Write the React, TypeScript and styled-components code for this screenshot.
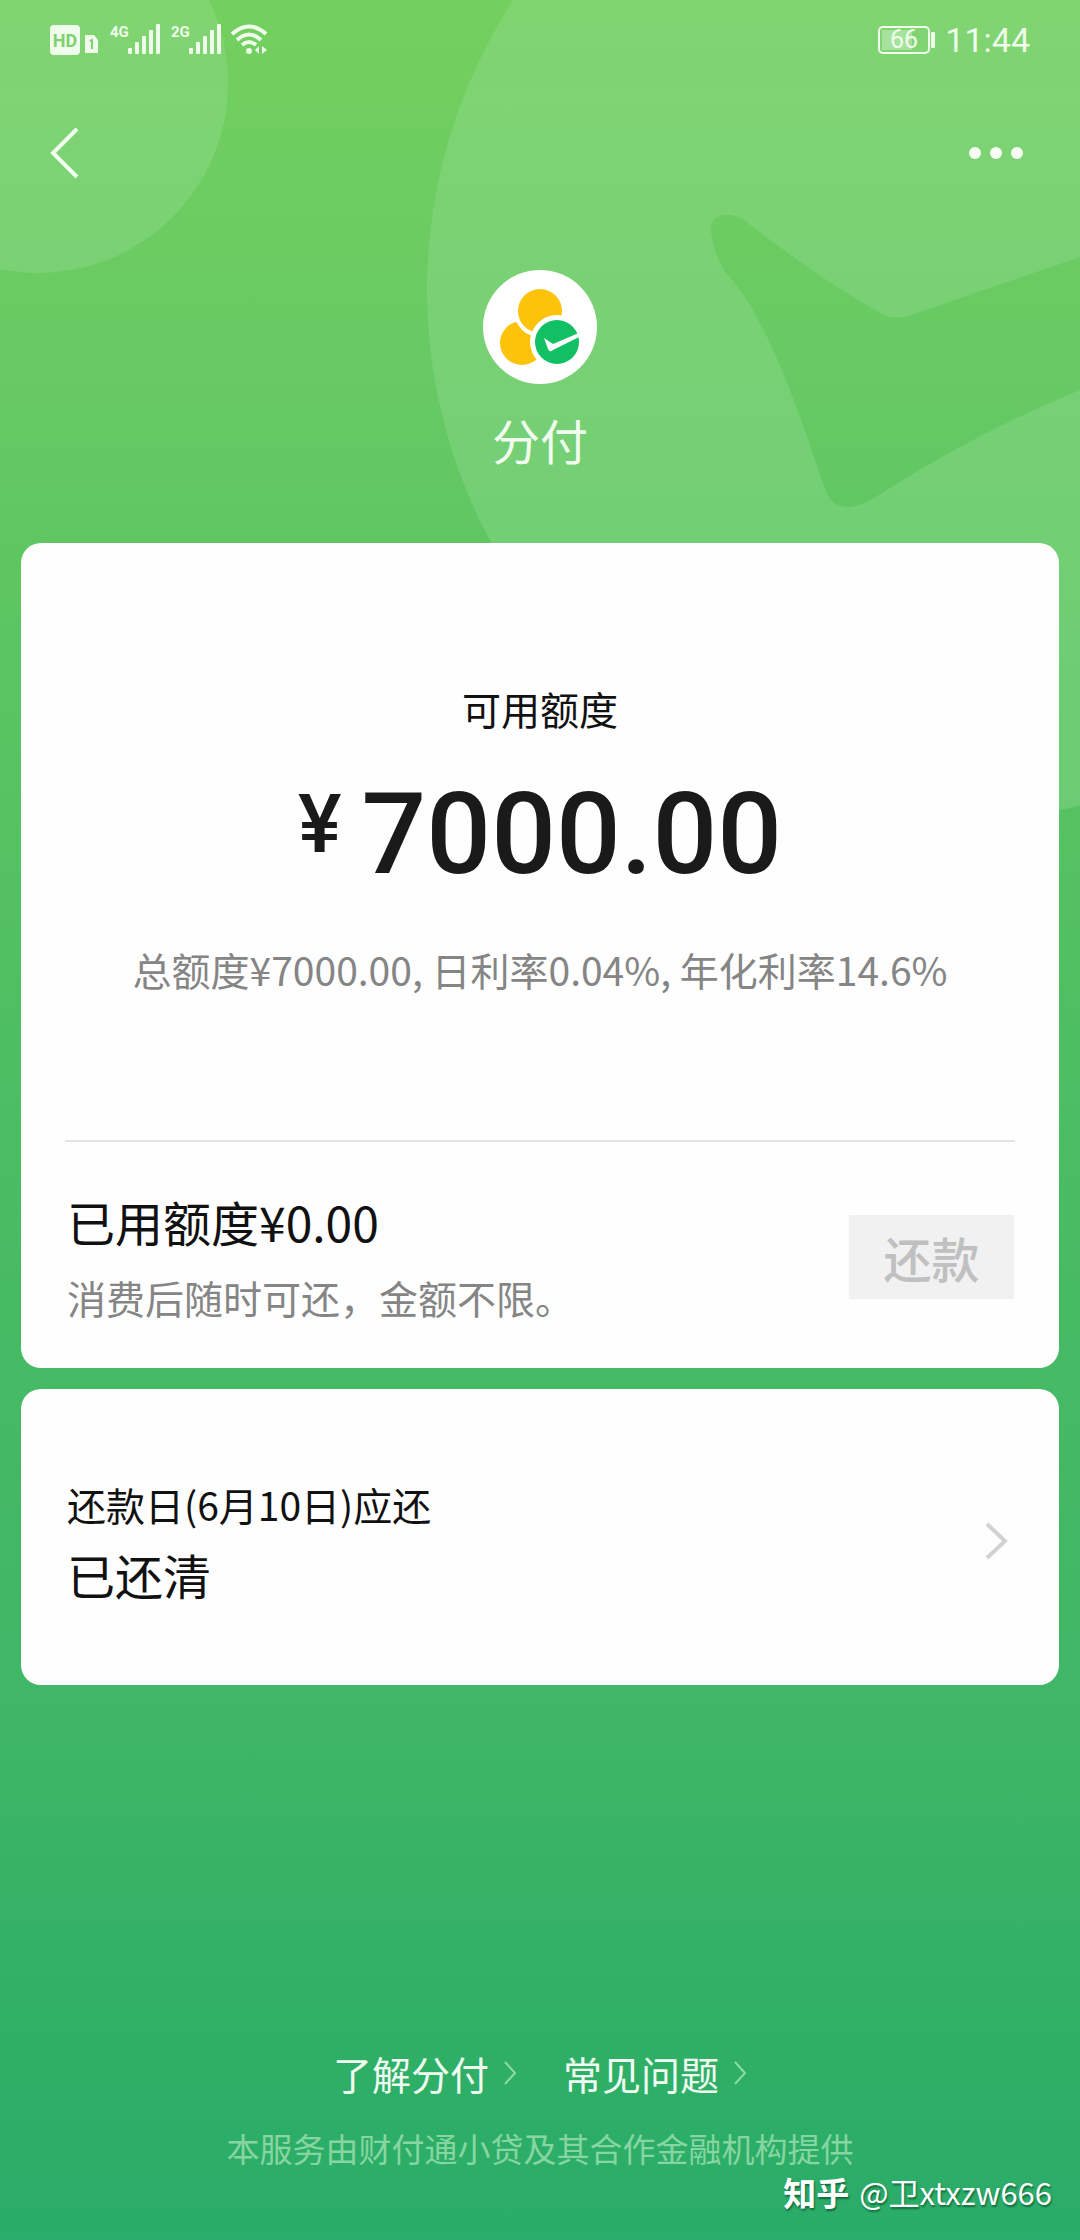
import React from "react";
import styled, { createGlobalStyle } from "styled-components";

const GlobalStyle = createGlobalStyle`
  * { box-sizing: border-box; }
  body { margin: 0; }
  button, a { font: inherit; color: inherit; text-decoration: none; }
`;

const cjk = `"Noto Sans CJK SC", "Noto Sans", sans-serif`;

const Page = styled.div`
  position: relative;
  display: flex;
  flex-direction: column;
  min-height: 100vh;
  overflow: hidden;
  font-family: ${cjk};
  background: linear-gradient(
    #74d05e 0%,
    #66c964 18%,
    #5dc661 26%,
    #48bb63 55%,
    #40b667 76%,
    #30b065 90%,
    #2aac6a 100%
  );
`;

const Backdrop = styled.svg`
  position: absolute;
  top: 0;
  right: 0;
  width: 1080px;
  height: 830px;
`;

const Content = styled.div`
  position: relative;
  display: flex;
  flex-direction: column;
  flex: 1;
`;

const StatusBar = styled.div`
  display: flex;
  justify-content: space-between;
  align-items: center;
  height: 80px;
  padding: 0 50px;
  color: #effceb;
`;

const StatusGroup = styled.div`
  display: flex;
  align-items: center;
  gap: 8px;
`;

const Clock = styled.span`
  font: 400 34px/40px Roboto, sans-serif;
`;

const NavBar = styled.nav`
  display: flex;
  justify-content: space-between;
  align-items: center;
  height: 146px;
  padding: 0 50px;
`;

const IconButton = styled.button`
  display: flex;
  padding: 0;
  border: 0;
  background: none;
  cursor: pointer;
`;

const Hero = styled.header`
  display: flex;
  flex-direction: column;
  align-items: center;
  padding: 44px 0 72px;
`;

const Title = styled.h1`
  margin: 23px 0 0;
  font-size: 48px;
  font-weight: 400;
  line-height: 64px;
  color: #f0fdee;
`;

const Cards = styled.main`
  display: flex;
  flex-direction: column;
  gap: 21px;
  padding: 0 21px;
`;

const Card = styled.section`
  border-radius: 20px;
  background: #fefefe;
`;

const Summary = styled.div`
  display: flex;
  flex-direction: column;
  align-items: center;
  margin: 0 44px;
  padding: 137px 0 143px;
  border-bottom: 2px solid #e1e3e5;
`;

const Body = styled.p<{ $tone?: string }>`
  margin: 0;
  font-size: 39px;
  font-weight: 400;
  line-height: 56px;
  color: ${(p) => p.$tone ?? "#111"};
`;

const Heading = styled.p`
  margin: 0;
  font-size: 48px;
  font-weight: 400;
  line-height: 64px;
  color: #111;
`;

const Amount = styled.div`
  display: flex;
  align-items: flex-start;
  gap: 20px;
  margin: 42px 0 51px;
  font-family: Roboto, sans-serif;
  font-weight: 500;
  color: #1a1a1a;
`;

const Currency = styled.span`
  font-size: 82px;
  line-height: 92px;
`;

const Value = styled.span`
  font-size: 114px;
  line-height: 112px;
`;

const Row = styled.div`
  display: flex;
  justify-content: space-between;
  align-items: center;
  padding: 47px 45px 43px 46px;
`;

const DueRow = styled.a`
  display: flex;
  justify-content: space-between;
  align-items: center;
  padding: 87px 50px 79px 46px;
`;

const Lines = styled.div<{ $gap: number }>`
  display: flex;
  flex-direction: column;
  gap: ${(p) => p.$gap}px;
`;

const RepayButton = styled.button`
  width: 165px;
  height: 84px;
  padding: 0;
  border: 0;
  background: #f1f1f1;
  font-size: 48px;
  font-weight: 500;
  line-height: 64px;
  color: #c0c0c0;
`;

const Footer = styled.footer`
  display: flex;
  flex-direction: column;
  margin-top: auto;
  padding-bottom: 28px;
`;

const Links = styled.div`
  display: flex;
  justify-content: center;
  gap: 46px;
`;

const FooterLink = styled.a`
  display: flex;
  align-items: center;
  gap: 14px;
  font-size: 39px;
  line-height: 56px;
  color: #f0fcf2;
`;

const Provider = styled.p`
  margin: 23px 0 0;
  font-size: 33px;
  font-weight: 400;
  line-height: 48px;
  text-align: center;
  color: #87d5a0;
`;

const Watermark = styled.p`
  display: flex;
  justify-content: flex-end;
  gap: 10px;
  margin: 0;
  padding-right: 28px;
  font-size: 31px;
  line-height: 40px;
  color: #fff;
  text-shadow: 1px 2px 2px rgba(0, 60, 30, 0.6);
`;

const Brand = styled.span`
  font-size: 33px;
  font-weight: 700;
`;

function Decoration() {
  return (
    <Backdrop viewBox="0 0 1080 830" aria-hidden="true">
      <defs>
        <mask id="tick">
          <rect width="1080" height="830" fill="#fff" />
          <path
            d="M711 232C708 212 734 210 748 223C798 262 846 294 882 314Q897 321 914 314Q1000 284 1090 254V386Q980 430 882 493Q836 524 824 486C796 404 766 315 726 273Q714 256 711 232Z"
            fill="#000"
          />
        </mask>
      </defs>
      <g fill="#a0e0a0" fillOpacity="0.3">
        <circle cx="38" cy="83" r="190" />
        <circle cx="957" cy="290" r="530" mask="url(#tick)" />
      </g>
    </Backdrop>
  );
}

function SignalIcons() {
  const bars = [6, 12, 18, 24, 30];
  const text = { fontFamily: "Roboto, sans-serif", fontWeight: 700 };
  return (
    <svg width="220" height="32" viewBox="50 25 220 32" fill="currentColor" role="img" aria-label="信号">
      <rect x="50" y="26" width="30" height="30" rx="4" />
      <text x="65" y="48" fontSize="18" textAnchor="middle" fill="#7fd171" {...text}>HD</text>
      <path d="M85 36h9l4 5v13h-13z" />
      <path d="M90 42l2-1v9" stroke="#7fd171" strokeWidth="2" fill="none" />
      <text x="110" y="38" fontSize="15" {...text}>4G</text>
      <text x="171" y="38" fontSize="15" {...text}>2G</text>
      {[128, 189].map((x) =>
        bars.map((h, i) => <rect key={`${x}-${i}`} x={x + i * 7} y={55 - h} width="4" height={h} rx="1" />)
      )}
      <g fill="none" stroke="currentColor" strokeWidth="4">
        <path d="M232 35Q249 20 266 35" />
        <path d="M237 41Q249 30 261 41" />
        <path d="M242 46Q249 40 256 46" />
      </g>
      <circle cx="249" cy="52" r="3" />
      <path d="M259 47v8l-4-4zM262 47l5 4-5 4z" />
    </svg>
  );
}

function BatteryIcon() {
  return (
    <svg width="59" height="30" viewBox="0 0 59 30" fill="currentColor" role="img" aria-label="电量">
      <rect x="1" y="2" width="50" height="26" rx="4" fill="none" stroke="currentColor" strokeWidth="2" />
      <rect x="4" y="5" width="30" height="20" fillOpacity="0.35" />
      <rect x="53" y="7" width="4" height="16" rx="1" />
      <text x="26" y="23" fontSize="25" textAnchor="middle" fontFamily="Roboto, sans-serif" fontWeight="400">66</text>
    </svg>
  );
}

function BrandMark() {
  return (
    <svg width="114" height="114" viewBox="0 0 114 114" aria-hidden="true">
      <circle cx="57" cy="57" r="57" fill="#fff" />
      <circle cx="39" cy="73" r="22" fill="#fdc20a" />
      <circle cx="57" cy="41" r="26" fill="#fff" />
      <circle cx="57" cy="41" r="22" fill="#fdc20a" />
      <circle cx="74" cy="72" r="27" fill="#fff" />
      <circle cx="74" cy="72" r="22" fill="#12c064" />
      <path d="M61 68L70 74L98 62V66L70 80Q67 83 65 79Z" fill="#fff" />
    </svg>
  );
}

function Chevron({ w, h, color, stroke }: { w: number; h: number; color: string; stroke: number }) {
  const s = stroke;
  return (
    <svg width={w} height={h} viewBox={`0 0 ${w} ${h}`} fill="none" stroke={color} strokeWidth={s} aria-hidden="true">
      <path d={`M${s} ${s / 2}L${w - s} ${h / 2}L${s} ${h - s / 2}`} />
    </svg>
  );
}

export default function App() {
  return (
    <Page>
      <GlobalStyle />
      <Decoration />
      <Content>
        <StatusBar>
          <SignalIcons />
          <StatusGroup>
            <BatteryIcon />
            <Clock>11:44</Clock>
          </StatusGroup>
        </StatusBar>
        <NavBar>
          <IconButton aria-label="返回">
            <svg width="30" height="52" viewBox="0 0 30 52" fill="none" stroke="#f2fff0" strokeWidth="4">
              <path d="M27 2L3 26L27 50" />
            </svg>
          </IconButton>
          <IconButton aria-label="更多">
            <svg width="62" height="14" viewBox="0 0 62 14" fill="#f7fff5">
              <circle cx="7" cy="7" r="6" />
              <circle cx="28" cy="7" r="6" />
              <circle cx="49" cy="7" r="6" />
            </svg>
          </IconButton>
        </NavBar>
        <Hero>
          <BrandMark />
          <Title>分付</Title>
        </Hero>
        <Cards>
          <Card>
            <Summary>
              <Body>可用额度</Body>
              <Amount>
                <Currency>¥</Currency>
                <Value>7000.00</Value>
              </Amount>
              <Body $tone="#858585">总额度¥7000.00, 日利率0.04%, 年化利率14.6%</Body>
            </Summary>
            <Row>
              <Lines $gap={16}>
                <Heading>已用额度¥0.00</Heading>
                <Body $tone="#858585">消费后随时可还，金额不限。</Body>
              </Lines>
              <RepayButton disabled>还款</RepayButton>
            </Row>
          </Card>
          <Card>
            <DueRow href="#bill">
              <Lines $gap={10}>
                <Body>还款日(6月10日)应还</Body>
                <Heading>已还清</Heading>
              </Lines>
              <Chevron w={26} h={38} color="#d2d2d2" stroke={4} />
            </DueRow>
          </Card>
        </Cards>
        <Footer>
          <Links>
            <FooterLink href="#about">
              了解分付
              <Chevron w={14} h={24} color="#8edba4" stroke={2} />
            </FooterLink>
            <FooterLink href="#faq">
              常见问题
              <Chevron w={14} h={24} color="#8edba4" stroke={2} />
            </FooterLink>
          </Links>
          <Provider>本服务由财付通小贷及其合作金融机构提供</Provider>
          <Watermark>
            <Brand>知乎</Brand>
            <span>@卫xtxzw666</span>
          </Watermark>
        </Footer>
      </Content>
    </Page>
  );
}
